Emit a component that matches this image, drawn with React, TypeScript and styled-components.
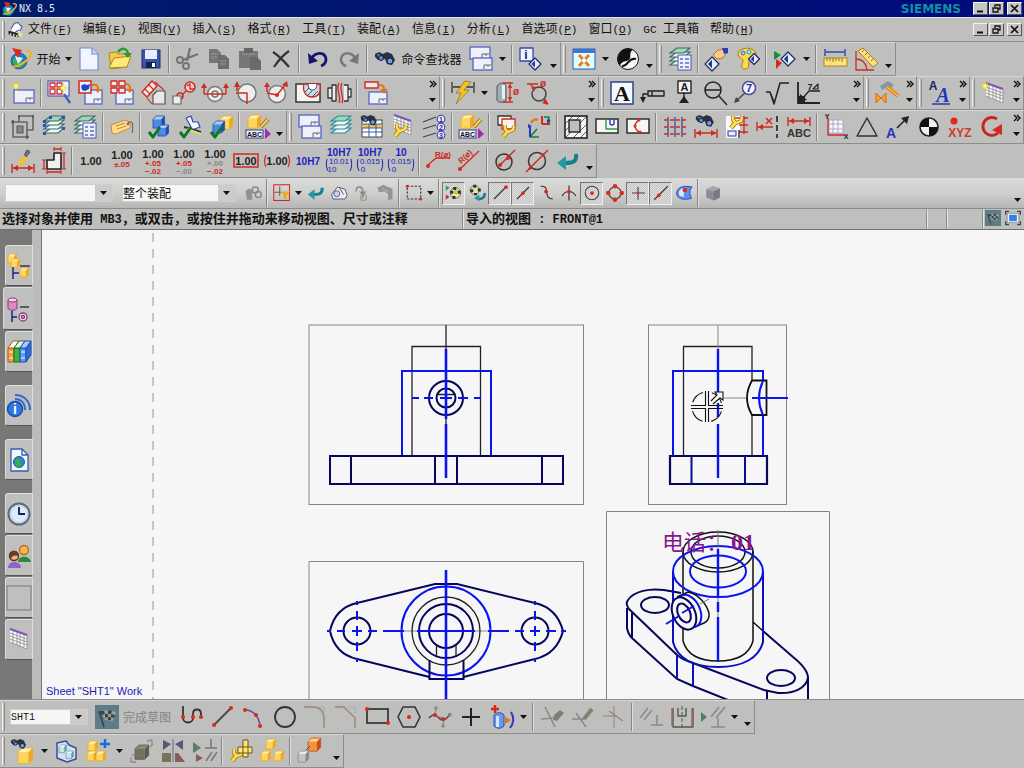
import React from 'react';
import styled, { createGlobalStyle } from 'styled-components';

const cjk = '"Noto Sans CJK SC", sans-serif';
const face = '#bfbfbd';
const RED = '#cf2a22';
const INK = '#222';
const GRAY = '#757575';

const GlobalStyle = createGlobalStyle`
  * { box-sizing: border-box; }
  html, body { margin: 0; padding: 0; background: ${face}; }
  body { font-family: "Liberation Sans", ${cjk}; font-size: 12px; color: #111; }
  button, select { font: inherit; color: inherit; margin: 0; padding: 0; border: 0; border-radius: 0; background: none; }
`;

const Window = styled.div`
  display: flex;
  flex-direction: column;
  height: 100vh;
  min-height: 600px;
  overflow: hidden;
`;

const TitleBar = styled.header`
  flex: none;
  display: flex;
  align-items: center;
  height: 17px;
  padding: 0 2px 0 1px;
  background: linear-gradient(90deg, #001c6a, #000a7e);
  color: #e8e8f0;
`;

const Title = styled.h1`
  flex: 1;
  margin: 0;
  padding-left: 2px;
  font: 10px/16px "DejaVu Sans Mono", monospace;
`;

const Brand = styled.span`
  margin-right: 11px;
  color: #0e93a0;
  font: bold 12px/16px "DejaVu Sans", sans-serif;
`;

const MenuBar = styled.nav`
  flex: none;
  display: flex;
  align-items: center;
  height: 25px;
  padding: 0 2px 0 0;
  border-top: 1px solid #e4e4e2;
  border-bottom: 1px solid #8f8f8d;
`;

const MenuItems = styled.div`
  flex: 1;
  display: flex;
  gap: 11px;
  padding-left: 3px;
`;

const MenuItem = styled.button`
  flex: none;
  font: 12px/22px "Liberation Mono", ${cjk};
  white-space: nowrap;
`;

const Latin = styled.span`
  font: 11px/22px "Liberation Mono", monospace;
`;

const WinButton = styled.button<{ $spaced?: boolean }>`
  display: flex;
  align-items: center;
  justify-content: center;
  width: 15px;
  height: 13px;
  margin-left: ${p => (p.$spaced ? 3 : 1)}px;
  background: #c6c6c4;
  border: 1px solid;
  border-color: #f4f4f4 #555 #555 #f4f4f4;
`;

const ToolRow = styled.div`
  flex: none;
  display: flex;
  height: 34px;
`;

const Bar = styled.div<{ $width?: number }>`
  display: flex;
  flex: ${p => (p.$width ? `0 0 ${p.$width}px` : '1 0 auto')};
  align-items: center;
  border: 1px solid;
  border-color: #d6d6d4 #8d8d8b #8d8d8b #b4b4b2;
  border-left: 0;
`;

const Grip = styled.span<{ $short?: boolean }>`
  flex: none;
  width: 3px;
  height: ${p => (p.$short ? 18 : 28)}px;
  margin: 0 2px;
  border-left: 1px solid #eee;
  border-right: 1px solid #8c8c8a;
`;

const Separator = styled.span`
  flex: none;
  width: 2px;
  height: 28px;
  margin: 0 2px;
  border-left: 1px solid #858583;
  border-right: 1px solid #e0e0de;
`;

const ToolButton = styled.button<{ $width?: number; $faded?: boolean }>`
  flex: none;
  display: flex;
  align-items: center;
  justify-content: center;
  gap: 4px;
  width: ${p => p.$width ?? 31}px;
  height: 30px;
  font: 12px/20px ${cjk};
  color: ${p => (p.$faded ? '#858585' : '#111')};
  white-space: nowrap;
`;

const SmallTool = styled.button<{ $on?: boolean }>`
  flex: none;
  display: flex;
  align-items: center;
  justify-content: center;
  width: 23px;
  height: 23px;
  border: 1px solid;
  border-color: ${p => (p.$on ? '#777 #eee #eee #777' : 'transparent')};
  background: ${p => (p.$on ? 'repeating-conic-gradient(#dcdcdc 0 25%, #c6c6c6 0 50%) 0 0 / 2px 2px' : 'none')};
`;

const ArrowButton = styled.button<{ $width?: number }>`
  flex: none;
  display: flex;
  align-items: center;
  justify-content: center;
  width: ${p => p.$width ?? 13}px;
  height: 28px;
`;

const OptionsButton = styled.button`
  flex: none;
  display: flex;
  flex-direction: column;
  align-items: center;
  justify-content: space-between;
  width: 13px;
  height: 30px;
  margin-left: auto;
  padding: 3px 0 6px;
`;

const SelectionBar = styled.div`
  flex: none;
  display: flex;
  align-items: center;
  height: 30px;
  padding-left: 2px;
  background: linear-gradient(#dadad8, #cfcfcd 50%, #b6b6b4);
`;

const Combo = styled.div<{ $width: number; $gap: number; $height: number }>`
  flex: none;
  display: grid;
  align-items: center;
  width: ${p => p.$width}px;
  height: ${p => p.$height}px;
  margin: 0 ${p => p.$gap}px 0 3px;
  background: linear-gradient(90deg, #f6f6f5 calc(100% - 17px), #cbcbc9 0);
  border: 1px solid #cfcfcd;

  > * { grid-area: 1 / 1; }
  > svg { justify-self: end; margin-right: 5px; pointer-events: none; }
`;

const ComboSelect = styled.select`
  appearance: none;
  width: 100%;
  height: 100%;
  outline: 0;
  font: 12px/14px ${cjk};
`;

const MonoSelect = styled(ComboSelect)`
  font: 10px/13px "Liberation Mono", monospace;
`;

const StatusBar = styled.div`
  flex: none;
  display: flex;
  height: 21px;
  border-top: 1px solid #8c8c8a;
  font: bold 13px/17px ${cjk};
  white-space: nowrap;
`;

const StatusCell = styled.div<{ $width?: number }>`
  flex: ${p => (p.$width ? `0 0 ${p.$width}px` : '1')};
  padding-left: 2px;
  overflow: hidden;
  border-right: 1px solid #e6e6e4;
  box-shadow: inset -1px 0 #8c8c8a;
`;

const StatusLatin = styled.span`
  font: bold 12px/17px "Liberation Mono", monospace;
`;

const StatusIcon = styled.button`
  flex: none;
  width: 20px;
  height: 18px;
  padding: 1px;
`;

const Workspace = styled.main`
  flex: 1;
  display: flex;
  min-height: 0;
  border-top: 1px solid #6f6f6f;
`;

const ResourceBar = styled.div`
  flex: none;
  display: flex;
  flex-direction: column;
  width: 42px;
  padding-top: 15px;
  background: linear-gradient(90deg, #787876 32px, #bbbbb9 0);
  border-right: 1px solid #777;
`;

const ResourceTab = styled.button<{ $active?: boolean; $spaced?: boolean }>`
  flex: none;
  display: flex;
  align-items: center;
  justify-content: center;
  width: ${p => (p.$active ? 30 : 28)}px;
  height: ${p => (p.$active ? 43 : 41)}px;
  margin: ${p => (p.$spaced ? 12 : 0)}px 0 1px ${p => (p.$active ? 3 : 5)}px;
  background: ${face};
  border: 1px solid;
  border-color: #dededc ${p => (p.$active ? face : '#dededc')} #555 #dededc;
  border-radius: 3px 0 0 3px;
`;

const Canvas = styled.section`
  flex: 1;
  display: flex;
  min-width: 0;
  min-height: 0;
  background: #f5f6f5;
`;

const Drawing = styled.svg`
  flex: 1;
  min-width: 0;
  min-height: 0;
  height: 100%;
`;

const BottomDock = styled.footer`
  flex: none;
  border-top: 1px solid #8a8a88;
`;

const Glyph = styled.svg`
  flex: none;
  display: block;
  overflow: visible;
`;

const l = (d: string, stroke = INK, width = 1.5, fill = 'none') => (
  <path d={d} stroke={stroke} strokeWidth={width} fill={fill} strokeLinejoin="round" />
);
const f = (d: string, fill: string) => <path d={d} fill={fill} />;
const c = (x: number, y: number, r: number, stroke = INK, fill = 'none', width = 1.5) => (
  <circle cx={x} cy={y} r={r} stroke={stroke} fill={fill} strokeWidth={width} />
);
const dot = (x: number, y: number, r = 2) => <circle cx={x} cy={y} r={r} fill="#e02818" />;
const t = (x: number, y: number, size: number, fill: string, text: string, weight = 400) => (
  <text x={x} y={y} fontSize={size} fill={fill} fontWeight={weight} textAnchor="middle" fontFamily='"Liberation Sans", sans-serif'>{text}</text>
);
const star = (x: number, y: number) => (
  <>
    {l(`M${x - 5} ${y}h10M${x} ${y - 5}v10M${x - 3} ${y - 3}l6 6M${x + 3} ${y - 3}l-6 6`, '#d8cc3a', 1)}
    {c(x, y, 2, '#f4ec50', '#fff98a', 1)}
  </>
);
const cube = (x: number, y: number, s: number, a = '#ffd65c', b = '#f0a81c', e = '#fff0a8') => (
  <>
    {f(`M${x} ${y + s * 0.3}h${s * 0.75}v${s * 0.8}h${-s * 0.75}z`, a)}
    {f(`M${x} ${y + s * 0.3}l${s * 0.3} ${-s * 0.3}h${s * 0.75}l${-s * 0.3} ${s * 0.3}z`, e)}
    {f(`M${x + s * 0.75} ${y + s * 0.3}l${s * 0.3} ${-s * 0.3}v${s * 0.8}l${-s * 0.3} ${s * 0.3}z`, b)}
    {l(`M${x} ${y + s * 0.3}l${s * 0.3} ${-s * 0.3}h${s * 0.75}v${s * 0.8}l${-s * 0.3} ${s * 0.3}h${-s * 0.75}z`, b, 0.8)}
  </>
);
const wrench = (x: number, y: number) => (
  <g transform={`translate(${x} ${y})`}>
    {l('M2 13l5-6', '#a87a10', 4.5)}
    {l('M4 1v4l3 3 5-2 1-4', '#a87a10', 4)}
    {l('M2 13l5-6', '#ffd84c', 2.8)}
    {l('M4 1v4l3 3 5-2 1-4', '#ffe258', 2.4)}
  </g>
);
const binoc = (x: number, y: number) => (
  <g transform={`translate(${x} ${y})`}>
    {f('M0 2l4-2 4 2 4-2 5 2 3 6-3 5-5-1-2-5-4 0-3 1-3-3z', '#2c3140')}
    {f('M2 2l4 1-2 2z', '#8891a8')}
    {c(6, 6, 2.5, '#16182a', '#5a88dc', 1)}
    {c(15, 9, 3, '#16182a', '#6b9cf0', 1)}
  </g>
);
const page = (x: number, y: number, w: number, h: number) => (
  <>
    <rect x={x} y={y} width={w} height={h} fill="#eef1fc" stroke="#5565c4" strokeWidth="1.3" />
    {l(`M${x + w - 8} ${y + h - 1}v-4h7M${x + w - 4} ${y + h - 5}v2`, '#666', 1)}
  </>
);
const check = l('M2 17l4 5 7-10', '#0b7a22', 3);
const layers = (col: string) => (
  <>
    {[0, 4, 8, 12].map(o => (
      <path key={o} d={`M2 ${18 - o}l7-5h13l-6 5z`} fill={o === 12 ? '#9fd8b4' : '#eef8f6'} stroke={col} strokeWidth="1.1" />
    ))}
  </>
);
const diamond = (x: number, y: number, s: number) => (
  <>
    {l(`M${x} ${y - s}l${s} ${s}l${-s} ${s}l${-s} ${-s}z`, '#1c2a66', 1.2, '#e8eefc')}
    {f(`M${x} ${y - s * 0.6}v${s * 1.2}l${-s * 0.6} ${-s * 0.6}z`, '#1c3f9a')}
  </>
);
const globe = (
  <>
    {c(11, 14, 8, '#1a6a9c', '#1c7fc8', 1)}
    {f('M5 12c4-3 6 0 9 2s2 5-2 7c-4 0-8-3-7-9z', '#3cae5a')}
    {f('M7 9l8 2-5 6z', '#e4f6ff')}
    {f('M4 1l10 2-4 8z', '#e0281c')}
    {l('M18 4c6-1 7 3 1 9-5 5-13 8-16 6', '#f0b428', 2)}
  </>
);
const grid = (x: number, y: number) => (
  <g transform={`translate(${x} ${y})`}>
    {f('M0 0l17 6v14L0 13z', '#fafafa')}
    {l('M0 4l17 6M0 7l17 6M0 10l17 6M3 1v13M7 3v13M10 4v13M14 5v13M0 13l17 7V6', '#888', 0.8)}
    {l('M0 0l17 6', '#8050c0', 2)}
  </g>
);
const dimText = (sub1?: string, sub2?: string, gray?: number) => (
  <>
    {t(12, 9, 11, INK, '1.00', 700)}
    {sub1 && t(12, 17, 8, gray === 1 ? '#888' : RED, sub1, 700)}
    {sub2 && t(12, 25, 8, gray === 2 ? '#888' : RED, sub2, 700)}
  </>
);
const fitText = (rows: string[]) => (
  <>
    {t(12, 7, 10, '#2222c0', rows[0], 700)}
    {t(12, 15, 8, '#2222c0', rows[1])}
    {t(5, 23, 8, '#2222c0', rows[2])}
    {l('M0 10c-1 4-1 8 1 12M24 10c1 4 1 8-1 12', '#2222c0', 1)}
  </>
);
const flag = (
  <>
    <rect x="0" y="0" width="24" height="24" fill="#5c7c8a" />
    {f('M5 6l8-1 8 2-3 9-8-1z', '#9a9c98')}
    {f('M5 6l4 0 1 3-4 1zM13 5l4 1-1 3-3 0zM10 9l3 0 0 3-3 1zM16 9l4 1-1 3-3-1zM13 12l3 0 0 3-3 0z', '#3c4448')}
    {l('M4 6l5 16', '#3a4246', 1.5)}
  </>
);

const icons: Record<string, React.ReactNode> = {
  nx: globe,
  app: <>{f('M5 11l5-8 6-1 4 5-3 7-6 2z', '#fff')}{l('M5 11l5-8 5-1 2 3 3 2-2 5-4 1-4 3', '#3c4fb4', 1.4)}{l('M2 14l17 5M3 14v4M7 15v5M11 17v4M15 18v3', '#222', 2)}{f('M16 14l5 3-2 5-5-3z', '#e8dc9a')}</>,
  newFile: <>{l('M3 1h12l6 6v16H3z', '#7b8ad4', 1.2, '#f2f5ff')}{l('M15 1v6h6', '#7b8ad4', 1.2, '#cfd8fa')}</>,
  open: <>{l('M1 6l7-1 2 2h9v13L3 22z', '#b08a14', 1, '#f0cc48')}{l('M1 21L6 11l17-2-4 11z', '#b08a14', 1, '#ffe97c')}{l('M10 5c4-5 9-4 10 2', '#2c9c30', 2.5)}{f('M15 6h9l-4 5z', '#2c9c30')}</>,
  save: <><rect x="3" y="3" width="18" height="18" fill="#3a55a8" stroke="#1d2c68" /><rect x="6" y="3" width="12" height="9" fill="#e6eefc" /><rect x="7" y="15" width="10" height="6" fill="#16204c" /><rect x="13" y="16" width="3" height="4" fill="#fff" /></>,
  cut: <>{l('M14 1l-3 13M22 7L7 13', GRAY, 2.4)}{c(4, 13, 3, GRAY, 'none', 2)}{c(10, 19, 3, GRAY, 'none', 2)}</>,
  copy: <>{f('M2 2h8l4 4v10H2z', '#777')}{f('M11 8h7l4 4v10H11z', '#6c6c6c')}{l('M4 7h6M4 10h6M13 14h6M13 17h6', '#999', 1)}</>,
  paste: <>{f('M1 4h19v17H1z', '#777')}<rect x="6" y="1" width="9" height="5" fill="#666" />{l('M4 7h13', '#999', 1)}{f('M12 10h7l4 4v9H12z', '#6a6a6a')}</>,
  del: l('M4 5c6 4 11 9 16 15M20 4C14 8 9 14 5 20', '#333', 2.2),
  undo: <>{l('M5 12c5-8 14-7 15 0 0 3-2 6-5 7', '#14146c', 2.8)}{f('M2 6l1 11 9-3z', '#14146c')}</>,
  redo: <>{l('M19 12C14 4 5 5 4 12c0 3 2 6 5 7', '#777', 2.5)}{f('M22 6l-1 11-9-3z', '#777')}</>,
  find: binoc(2, 5),
  sheets: <>{page(1, 0, 20, 12)}{page(4, 11, 19, 12)}</>,
  info: <>{l('M1 1h13v13H1z', '#3446b0', 1.3, '#f2f5ff')}{t(7, 12, 12, '#111d70', 'i', 700)}{diamond(16, 17, 6)}</>,
  fit: <><rect x="1" y="2" width="22" height="20" fill="#dff" stroke="#2c59b8" /><rect x="1" y="2" width="22" height="4" fill="#3c74d8" />{l('M7 8l10 11M17 8L7 19', '#f07818', 3)}{c(12, 13.5, 1.5, '#dff', '#dff')}</>,
  section: <>{c(12, 12, 10.5, '#111', '#f5f5f5', 1)}{f('M12 1.5a10.5 10.5 0 0 0-8 17c2-6 8-3 10-7 1-3-1-6 3-9z', '#111')}{l('M6 19c6 1 6-9 14-7', '#111', 2)}</>,
  layerList: <>{layers('#3c6a66')}<rect x="10" y="8" width="13" height="15" fill="#eef2ff" stroke="#4c5cb0" />{l('M12 12h3M17 12h4M12 16h3M17 16h4M12 20h3M17 20h4', '#5c6cc0', 1.3)}</>,
  editObj: <>{diamond(7, 17, 7)}{l('M8 8l5-5 7-1 2 3-4 6-6 1z', '#b87820', 1, '#fbc98a')}{f('M17 1l6 0 0 5-4 1z', '#2c3cb8')}</>,
  palette: <>{l('M3 4c6-5 16-3 17 3s-6 3-7 7 1 8-4 8-3-5-2-8-8-4-4-10z', '#a87812', 1, '#ffd84c')}{c(7, 6, 2, '#3c6cd8', '#8cc8f8', 1)}{c(13, 5, 2, '#2c8cb8', '#8ff', 1)}{diamond(18, 12, 5.5)}</>,
  compare: <>{f('M1 4l7 4-7 5z', '#179030')}{f('M3 12l6 4-6 6z', '#d02a20')}{diamond(15, 12, 7)}</>,
  ruler: <>{l('M2 2v7M22 2v7M3 5h18', '#2c49b0', 1.4)}<rect x="1" y="11" width="23" height="8" fill="#ffe27a" stroke="#b08424" />{l('M4 11v3M7 11v3M10 11v4M13 11v3M16 11v3M19 11v4', '#94701c', 1)}</>,
  angle: <>{l('M2 4v19h18M2 12c6 0 10 4 11 11', RED, 1.3)}{l('M4 4l5-3 15 15-5 4z', '#a67c20', 1, '#ffe07a')}{l('M8 5l2-2M11 8l2-2M14 11l2-2M17 14l2-2', '#94701c', 1)}</>,

  newSheet: <>{page(3, 9, 20, 13)}{star(5, 5)}</>,
  wizard: <><rect x="0" y="0" width="21" height="15" fill="#f4f4ff" stroke="#3446b0" />{l('M2 2h5v4H2zM9 2h5v4H9zM2 8h5v5H2zM9 8h5v5H9z', RED, 1.3)}{star(15, 7)}{l('M16 13l6 9', '#4860d0', 2.5)}</>,
  baseView: <>{page(6, 9, 17, 14)}<rect x="0" y="0" width="12" height="12" fill="#eef" stroke={RED} strokeWidth="1.5" />{f('M2 5l3-2 3 1 3-1-1 5-4 2-3-1z', '#2146c8')}{l('M13 4c5-1 6 1 6 4', '#e87418', 2)}{f('M15 8h7l-3 4z', '#e87418')}</>,
  stdViews: <>{page(6, 9, 17, 14)}{l('M1 0h6v5H1zM9 0h6v5H9zM1 7h6v5H1zM9 7h6v5H9z', RED, 1.3, '#f4e8e4')}{l('M16 3c3 0 4 2 4 5', '#e87418', 2)}{f('M16 8h7l-3 4z', '#e87418')}</>,
  projected: <>{l('M1 11L11 0l5 5L6 16z', RED, 1.4, '#f8e8e4')}{l('M12 23V14l4-4h8v13z', '#555', 1.2, '#e8e8e8')}{l('M4 8l5 5M8 4l5 5M14 1l9 8M6 17l5 6', RED, 1.1)}</>,
  detail: <>{c(18, 6, 5, RED, '#e4d4d0')}{l('M14 10l-4 4M15 5l3-2v5h4', RED, 1.3)}{c(8, 15, 3, RED)}{l('M1 15h8v8H1z', '#666', 1.2, '#eee')}</>,
  sectionV: <>{c(12, 13, 7.5, '#777', '#eee')}{c(12, 13, 3, '#777')}{l('M1 13V5M23 13V5M1 13h22', RED, 1.4)}{f('M1 2l3 5h-6zM23 2l3 5h-6z', RED)}</>,
  halfSec: <>{c(13, 12, 9, '#777', '#eee')}{l('M3 10V4M2 12h11v11', RED, 1.5)}{f('M3 0l3 6H0z', RED)}</>,
  revolved: <>{c(12, 13, 8.5, '#777', '#eee')}{l('M2 11V5M2 12l10 2 8-10', RED, 1.4)}{f('M2 1l3 5h-6zM22 0l1 6-6-2z', RED)}{dot(12, 14)}</>,
  breakout: <><rect x="0" y="3" width="24" height="18" fill="#f4f4f2" stroke="#333" strokeWidth="1.5" />{l('M8 3c-2 7 2 13 8 13s9-4 8-10V3z', RED, 1.3, '#cdd8e8')}{l('M9 11l4-4M11 15l5-5M16 16l6-6', '#456', 1)}{l('M12 3c0 8 9 8 9 0', '#333', 1, '#fff')}</>,
  breakView: <>{l('M1 7h4v10H1zM5 4h4v16H5z', '#333', 1.3, '#eee')}{l('M12 2c-4 7 3 13 0 20M15 2c-4 7 3 13 0 20', RED, 1.3)}{l('M17 4h4v16h-4M21 8h3v8h-3', '#333', 1.3, '#eee')}</>,
  updateView: <>{l('M1 1h13v6H1z', RED, 1.4, '#f4ece8')}{page(5, 11, 18, 12)}{l('M15 4c4 0 5 2 5 4', '#e87418', 2)}{f('M16 8h8l-4 5z', '#e87418')}</>,
  autoDim: <>{l('M1 1v11M23 1v11M2 6h20', '#333', 1.3)}{l('M14 0L5 12h5L5 23l13-14h-5l7-8z', '#8a6c10', 0.7, '#f0c428')}</>,
  cylDim: <>{l('M2 5c3-4 8-4 9 0v14c-1 3-8 3-9 0z', '#555', 1, '#9cb0b8')}{f('M7 4h3v14H7z', '#e6eef0')}{l('M8 2h10M8 21h10M15 4v15', RED, 1.3)}{f('M15 2l2 5h-4zM15 21l2-5h-4z', RED)}{t(21, 14, 10, RED, 'ø', 700)}</>,
  diaDim: <>{c(13, 13, 7, '#444')}{l('M1 3h11M5 4l3 4M18 18l4 5', RED, 1.3)}{f('M9 10l-4-3 4-2zM22 24l-6-2 4-4z', RED)}{t(17, 6, 10, RED, 'ø', 700)}</>,

  note: <><rect x="1" y="1" width="22" height="22" fill="#f6f8ff" stroke="#33408c" strokeWidth="1.5" /><text x="12" y="20" fontSize="22" fontWeight="700" textAnchor="middle" fontFamily='"Liberation Serif", serif' fill="#111">A</text></>,
  fcf: <>{l('M2 18V13h5M7 10h16v5H7zM11 10v5', '#222', 1.4)}{f('M2 22l-3-6h6z', '#222')}</>,
  datum: <>{l('M6 0h13v12H6zM12 12v6', '#222', 1.4, '#f4f4f4')}{t(12.5, 10, 11, '#222', 'A', 700)}{f('M12 15l5 7H7z', '#222')}</>,
  target: <>{c(10, 9, 8)}{l('M2 9h16M16 15l8 9', INK, 1.4)}</>,
  balloon: <>{c(15, 7, 6.5, '#4c4ca8', '#f4f4fc')}{t(15, 11, 11, '#2a2a9c', '7', 700)}{l('M11 12l-8 7', '#444', 1.3)}{f('M0 22l2-6 4 4z', '#444')}</>,
  surface: l('M1 11h4l4 12L15 2h9M5 11l4 10', INK, 1.5),
  weld: <>{l('M2 1v21h22', '#222', 1.8)}{l('M5 19l8-9h11', '#222', 1.3)}{f('M3 21l1-8 7 6zM2 15h7v7H2z', '#222')}{t(14, 9, 9, '#222', '7', 700)}{l('M17 8h5V3z', '#222', 1.2)}</>,
  hammer: <>{f('M5 5l8-5 6 4-3 3-4-1-5 3z', '#8694a4')}{l('M12 6l11 9', '#d88418', 4)}{l('M12 6l11 9', '#ffc050', 1.5)}{l('M1 12l10 10V12L1 22z', '#d46c10', 1, '#ff9c28')}</>,
  textStyle: <>{t(5, 9, 12, '#22226c', 'A', 700)}<text x="15" y="21" fontSize="20" fontWeight="700" fontStyle="italic" textAnchor="middle" fontFamily='"Liberation Serif", serif' fill="#2238b8">A</text>{l('M4 23h18', '#2238b8', 1.5)}</>,
  tableNew: <>{grid(5, 2)}{star(4, 5)}</>,

  frame: <>{l('M2 7h14v15H2zM8 1h14v14h-6M8 1v6', '#666', 1.6)}<rect x="6" y="11" width="6" height="7" fill="#888" stroke="#555" />{l('M0 7h3M2 5v4M15 22h3M16 20v4M22 0v3M8 0v3', '#555', 1.5)}</>,
  layers: <>{layers('#3c6a66')}{f('M1 17h3v3H1zM20 12h3v3h-3zM7 1h3v3H7zM20 1h3v3h-3zM1 9h3v3H1zM1 5h3v3H1z', '#3350b8')}</>,
  tag: <>{l('M1 10l14-5 6 3-1 5-14 6-4-1z', '#c88a30', 1, '#ffdc8c')}{l('M6 11l9-3M7 14l9-3', '#c88a30', 1)}{c(18, 9, 1, '#735', '#fff', 1)}{l('M18 8c4-3 6 0 4 10', '#555', 1)}</>,
  partCheck: <>{cube(6, 1, 11, '#4c8ae8', '#1c4cae', '#a8ccfa')}{cube(11, 10, 10, '#4c8ae8', '#1c4cae', '#a8ccfa')}{check}</>,
  draftCheck: <>{l('M8 3l5-2 2 6 5 0 2 5-8 3-2-5z', '#3446b0', 1.2, '#f4f6ff')}{l('M6 12l17 5', '#2c3050', 2)}{l('M9 14l14 5', '#e8d84c', 2)}{check}</>,
  asmCheck: <>{cube(11, 1, 12)}{cube(4, 6, 11, '#4c8ae8', '#1c4cae', '#a8ccfa')}{check}</>,
  abcEdit: <>{cube(2, 0, 12)}{l('M22 4l-7 8', '#8a6010', 3.5)}{l('M22 4l-7 8', '#ffd24c', 2)}<rect x="0" y="15" width="17" height="8" fill="#f4f4ff" stroke="#333c88" />{t(8.5, 21.5, 7, '#111', 'ABC', 700)}{f('M19 13l6 6-6 5z', '#a02cb4')}</>,
  stackLay: layers('#2c8c9c'),
  tableFind: <><rect x="2" y="5" width="20" height="17" fill="#fff" stroke="#444" />{f('M2 9h20v4H2z', '#f4c040')}{l('M2 9h20M2 13h20M2 17h20M9 9v13M16 9v13', '#345cb0', 1)}<g transform="scale(0.8)">{binoc(1, 0)}</g></>,
  gridWrench: <>{grid(3, 0)}{wrench(2, 8)}</>,
  autoBalloon: <>{l('M1 7l13-5M1 14l13-4M1 22l13-4', '#444', 1.3)}{[4, 12, 20].map((y, i) => <g key={y}>{c(19, y, 3.8, '#3c3cb0', '#eef', 1.1)}{t(19, y + 2.5, 7, '#2a2a9c', String(i + 1), 700)}</g>)}</>,
  boxWrench: <>{l('M2 1h13v9H2z', '#333', 1.3, '#f4f4f4')}{l('M6 4h13v10H6z', RED, 1.3, '#f8f4f0')}{wrench(5, 9)}</>,
  csys: <>{l('M3 12v10h9M3 22l7-8', '#1d8030', 1.7)}{l('M3 12v10', '#2238c8', 2)}{l('M15 9h8M15 9V1', RED, 2)}{l('M17 2h5v7', '#1d8030', 1.7)}{l('M4 8c2-4 5-4 7-3', '#e87418', 2.5)}{f('M1 9v4l4-2zM20 4l4 2-4 2z', '#2238c8')}</>,
  hatch: <><rect x="1" y="1" width="22" height="22" fill="#f4f4f4" stroke="#222" strokeWidth="1.6" />{l('M1 9l8-8M1 16L16 1M2 22L22 2M9 23L23 9M16 23l7-7', '#333', 0.8)}<rect x="5" y="5" width="11" height="12" fill={face} stroke="#222" strokeWidth="1.4" /></>,
  crop1: <><rect x="1" y="4" width="22" height="14" fill="#f6f6f6" stroke="#222" strokeWidth="1.4" />{l('M11 5v9h11', '#2c9c40', 1.4)}{l('M15 4v5q2 2 4 0V4', '#2c3cc0', 1.4)}</>,
  crop2: <><rect x="1" y="4" width="22" height="14" fill="#f6f6f6" stroke="#222" strokeWidth="1.4" />{l('M13 5q-8 6 0 12', RED, 1.5)}{dot(13, 5, 1.5)}{dot(9, 11, 1.5)}{dot(14, 17, 1.5)}</>,
  dimGrid: <>{l('M5 2v20M12 2v20M19 2v20', '#2c3480', 1.1)}<path d="M1 5h23M1 12h23M1 19h23" stroke={RED} strokeWidth="1.6" strokeDasharray="4 2" /></>,
  dimFind: <><g transform="scale(0.9)">{binoc(2, 0)}</g>{l('M1 14v9M23 14v9M2 18h20', RED, 1.4)}{f('M2 18l5-3v6zM22 18l-5-3v6z', RED)}</>,
  dimWrench: <>{f('M1 1h14v22H1z', '#f8f8ff')}{l('M6 3h17M14 10h9M14 17h9M19 1v18', RED, 1.3)}{wrench(4, 0)}<rect x="3" y="16" width="8" height="5" fill="#eef" stroke="#2238a8" />{l('M14 15v8', '#222', 1.3)}</>,
  dimX: <>{l('M1 7v9M2 12h15', RED, 1.4)}{f('M2 12l5-3v6z', RED)}{l('M10 3l6 6M16 3l-6 6', RED, 1.5)}<path d="M21 1v22" stroke="#222" strokeWidth="1.6" strokeDasharray="6 3" /></>,
  dimAbc: <>{l('M1 2v9M23 2v9M2 6h20', RED, 1.4)}{f('M2 6l5-3v6zM22 6l-5-3v6z', RED)}{t(12, 22, 11, '#333', 'ABC', 700)}</>,
  gridXY: <>{l('M5 5h14v13H5zM5 9h14M5 14h14M9 5v13M14 5v13', '#a8a8c8', 1, '#f8f8fc')}{l('M4 3v17h17', RED, 1.3)}{t(3, 4, 7, '#222', 'Y', 700)}{t(22, 24, 7, '#222', 'X', 700)}</>,
  triangle: l('M12 3l10 18H2z', '#333', 1.5),
  arrowA: <>{t(5, 23, 14, '#2a35b8', 'A', 700)}{l('M11 13l9-9', '#222', 1.6)}{f('M23 1l-2 8-6-6z', '#222')}</>,
  bullseye: <>{c(12, 12, 9, '#222', '#f0f0f0', 1.6)}{f('M12 12V3a9 9 0 0 0-9 9zM12 12v9a9 9 0 0 0 9-9z', '#111')}</>,
  xyz: <>{dot(6, 6, 3.5)}{t(12, 22, 12, '#d03a30', 'XYZ', 700)}</>,
  refresh: <>{l('M18 4A9 9 0 1 0 19 18', '#c8281c', 3)}{f('M13 15l10-6v11z', '#d8281c')}</>,

  dimBrush: <>{l('M1 15v9M23 15v9M2 19h20', RED, 1.4)}{f('M2 19l5-3v6zM22 19l-5-3v6z', RED)}{l('M16 1l3 2-4 5-2-1z', '#345', 1, '#6b7ca0')}{f('M13 6l4 4-5 6-6-1 2-3z', '#f0c040')}</>,
  profile: <>{l('M12 4h7v16H5v-9h7z', '#222', 1.6, '#f0f0ee')}{l('M12 0h7M2 11v9M5 23h14M22 4v16', RED, 1.3)}{l('M0 11h4M0 20h4M20 4h4M20 20h4M12-2v4M19-2v4M5 21v4M19 21v4', RED, 1.1)}</>,
  d1: t(12, 16, 11, INK, '1.00', 700),
  d2: <g transform="translate(0 1)">{dimText('±.05')}</g>,
  d3: dimText('+.05', '−.02'),
  d4: dimText('+.05', '−.00', 2),
  d5: dimText('+.00', '−.02', 1),
  d6: <><rect x="0" y="5" width="24" height="13" fill="none" stroke={RED} strokeWidth="1.5" />{t(12, 16, 11, '#222', '1.00', 700)}</>,
  d7: <>{t(12, 16, 11, '#222', '1.00', 700)}{l('M1 6c-2 4-2 8 0 12M23 6c2 4 2 8 0 12', RED, 1.2)}</>,
  d8: t(12, 16, 10, '#2222c0', '10H7', 700),
  d9: fitText(['10H7', '10.01', '10']),
  d10: fitText(['10H7', '0.015', '0']),
  d11: fitText(['10', '0.015', '0']),
  rad1: <>{l('M2 16l8-7h14', RED, 1.3)}{dot(2, 17)}{t(17, 8, 8, RED, 'R(ø)', 700)}</>,
  rad2: <>{l('M2 21L22 2', RED, 1.3)}{dot(3, 20)}<g transform="rotate(-43 10 11)">{t(11, 10, 8, RED, 'R(ø)', 700)}</g></>,
  hole1: <>{c(10, 13, 8, '#333')}{l('M6 16L21 1', RED, 1.4)}{dot(6, 16)}{dot(14, 9)}</>,
  hole2: <>{c(12, 12, 8.5, '#333')}{l('M1 23L23 1', RED, 1.4)}{f('M3 21l5-1-3-4zM20 4l-5 1 4 3z', RED)}</>,
  back: <>{l('M20 5c1 7-2 9-11 9', '#15808c', 4)}{f('M1 14l9-7v14z', '#2497a0')}</>,

  asmGray: <>{f('M2 9l5-3 4 3v12H4z', '#919191')}{c(15, 8, 4, '#888', 'none', 2)}{c(19, 14, 4, '#888', 'none', 2)}</>,
  selFilter: <><rect x="1" y="1" width="21" height="21" fill="none" stroke={RED} strokeWidth="1.4" />{l('M2 11h10M9 3v13', '#655', 1.3)}{f('M9 10h14l-5 6v5l-4-2v-4z', '#f0a828')}</>,
  magnet: <>{l('M2 14L10 4l10 3 3 8-3 5H4z', '#446', 1.1, '#e4eaf6')}{c(9, 13, 4, '#446', '#c4d4ee', 1)}{l('M13 6l5 8', RED, 1.3)}</>,
  clock1: <>{l('M4 10c0-8 9-8 9 0v9', '#888', 2)}{f('M8 10h10l-5 6z', '#888')}{c(14, 18, 4, '#998', 'none', 1.5)}</>,
  clock2: <>{f('M2 5l8-4 6 3 6 2v14l-6 2v-9l-5-3-7 1z', '#949494')}{l('M8 6l8 4', '#b0b0b0', 1.5)}</>,
  marquee: <><rect x="3" y="3" width="18" height="17" fill="none" stroke="#333" strokeWidth="1.5" strokeDasharray="3 2" />{dot(3, 3)}{dot(21, 20)}</>,
  snapAll: <>{c(14, 12, 7, '#555', '#e8e4b0', 1)}{f('M11 4h4v4h-4zM17 9h4v4h-4zM10 16h4v4h-4zM7 9h4v4H7z', '#332')}{c(15, 11, 2, '#a80', '#fd4', 1)}{f('M1 2l5 3-5 4z', '#2a9c38')}{f('M1 14l5 3-5 4z', RED)}</>,
  snapSet: <>{c(9, 8, 6, '#555', '#e8e4b0', 1)}{f('M7 1h4v4H7zM13 6h4v4h-4zM3 7h4v4H3zM8 12h4v3H8z', '#332')}{l('M22 12c1 6-3 8-9 8', '#15808c', 3.5)}{f('M8 19l7-5v9z', '#2497a0')}</>,
  endPt: <>{l('M4 20L20 4', '#333', 1.6)}{dot(20, 4, 2.5)}</>,
  midPt: <>{l('M4 20L20 4', '#333', 1.6)}{dot(12, 12, 2.5)}</>,
  ctrlPt: <>{l('M5 3c9 0 7 4 8 9s2 8 8 8', '#333', 1.6)}{dot(12, 10, 2.5)}</>,
  interPt: <>{l('M12 2v20M3 16c4-8 14-8 18 0', '#333', 1.6)}{dot(12, 10, 2.5)}</>,
  center: <>{c(12, 12, 9, '#444')}{dot(12, 12, 2.5)}</>,
  quad: <>{c(12, 12, 8, '#444')}{dot(12, 3, 3)}{dot(12, 21, 3)}{dot(3, 12, 3)}{dot(21, 12, 3)}</>,
  plusPt: <>{l('M12 4v17M4 12h17', '#444', 1.5)}{dot(12, 12, 1.5)}</>,
  onCurve: <>{l('M3 21L21 3', '#333', 1.6)}{dot(9, 15, 2.5)}</>,
  onFace: <>{l('M2 13C3 3 12 2 23 4c-4 3-4 9-1 15-7 2-18 3-20-6z', '#2450b8', 1.3, '#5c90ea')}{f('M5 12c1-6 6-7 10-7-3 4-4 8-3 12-4 0-7-1-7-5z', '#d6e8ff')}{dot(13, 8, 3)}</>,
  solidGray: <>{f('M3 7l9-4 9 3v12l-8 4-10-4z', '#8a8d94')}{f('M3 7l9-4 9 3-8 4z', '#a5a8ad')}{f('M13 10l8-4v12l-8 4z', '#777b84')}</>,

  flag,
  fitScreen: <><rect x="5" y="6" width="14" height="12" fill="#2c84dc" stroke="#eef" strokeWidth="2.5" />{l('M1 7V2h5M18 2h5v5M23 17v5h-5M6 22H1v-5', '#444', 2)}{l('M3 5h18v14H3z', '#777', 1)}</>,

  nav: <>{cube(1, 0, 8)}{cube(4, 5, 8)}{cube(13, 14, 8)}{l('M13 12h10', '#223', 1.3)}{l('M6 13v12M6 19h6', '#22228c', 1.5)}</>,
  partNav: <>{l('M2 3v8c0 3 9 3 9 0V3', '#8c3c78', 1, '#d88cc0')}<ellipse cx="6.5" cy="3" rx="4.5" ry="2" fill="#f4d4ea" stroke="#8c3c78" />{l('M14 10h9', '#223', 1.3)}{l('M6 14v11M6 20h5', '#22228c', 1.5)}{c(17, 20, 4, '#8c3c78', '#f4e4f0', 1.3)}{c(17, 20, 1.5, '#8c3c78')}</>,
  books: <>{l('M1 8h6v14H1z', '#b45c10', 1, '#f89c3c')}{l('M7 8h6v14H7z', '#17701c', 1, '#3cb444')}{l('M13 8h6v14h-6z', '#1c4cae', 1, '#5c9cf8')}{l('M19 8l5-7v14l-5 7z', '#1c4cae', 1, '#2c6cd8')}{l('M1 8l5-7h6L7 8z', '#b45c10', 1, '#fff')}{l('M7 8l5-7h6l-5 7z', '#17701c', 1, '#e4f8e4')}{l('M13 8l5-7h6l-5 7z', '#1c4cae', 1, '#a4ccff')}{l('M2 12h4M2 18h4M14 12h4M14 18h4', '#fff', 1)}</>,
  hd: <>{c(8, 15, 7.5, '#124cae', '#2c78e0', 1.4)}{t(8, 20, 14, '#fff', 'i', 700)}{l('M8 5c6 0 10 4 10 11M8 1c9 0 15 6 15 15', '#3466cc', 2)}</>,
  web: <>{l('M4 1h11l6 6v16H4z', '#345cb0', 1.3, '#f4f8ff')}{l('M15 1v6h6', '#345cb0', 1.3)}{c(12, 14, 5.5, '#1c5c9c', '#2c88d0', 1)}{f('M8 12c3-3 6 0 5 2s3 3 0 5-5-3-5-7z', '#3cac4c')}</>,
  clock: <>{c(12, 12, 10.5, '#5c6878', '#dcecfc', 2)}{c(12, 12, 8.5, '#b8ccdc', 'none', 1)}{l('M12 5v7h6', '#111c50', 1.8)}</>,
  people: <>{f('M11 18c0-7 12-7 13 0z', '#2a8c38')}{c(17, 6, 4.5, '#b46818', '#f8b450', 1.3)}{f('M1 24c0-8 13-8 13 0z', '#8c64d0')}{c(7, 12, 4.5, '#5c3020', '#f0b088', 1.3)}{f('M2 13c-1-8 10-8 10-1-4-1-7-1-8 3z', '#6c3c24')}</>,
  blank: <rect x="0" y="0" width="24" height="24" fill="none" stroke="#888" strokeWidth="1.3" />,
  sheetGrid: grid(3, 1),

  curveProf: <>{l('M3 1v12c0 6 10 6 10 0V9c0-6 8-6 8 0v4', '#333', 1.8)}{dot(3, 12)}{dot(13, 12)}{dot(21, 12)}</>,
  line: <>{l('M3 20L20 3', '#444', 1.8)}{dot(3, 20)}{dot(20, 3)}</>,
  arc: <>{l('M3 5c8 0 14 6 15 16', '#5c4cae', 1.5)}{dot(3, 5)}{dot(14, 10)}{dot(18, 21)}</>,
  circle: c(12, 12, 10, '#333', 'none', 1.8),
  fillet: <>{l('M0 2h8c8 0 12 4 12 12v9', '#998480', 1.4)}{l('M13 2h7v6', '#aaa', 1)}</>,
  chamfer: <>{l('M0 2h9l11 11v10', '#998480', 1.4)}{l('M13 2h7v6', '#aaa', 1)}</>,
  rect: <><rect x="1" y="4" width="21" height="14" fill="none" stroke="#333" strokeWidth="1.7" />{dot(1, 4)}{dot(22, 18)}</>,
  hexagon: <>{l('M6 2h12l5 10-5 10H6L1 12z', '#333', 1.6)}{dot(12, 12)}</>,
  spline: <>{l('M1 13c6-6 7-2 11 1s8-1 10-6', '#444', 1.4)}{l('M8 3L7 10l9 4-1 7', '#888', 1.2)}{dot(7, 10)}{dot(15, 14)}{c(8, 3, 1, '#888', '#888')}{c(15, 21, 1, '#888', '#888')}{c(22, 10, 1, '#888', '#888')}</>,
  plus: l('M12 3v18M3 12h18', '#222', 2),
  project: <>{l('M5 0v8M1 4h8', '#d82818', 2.5)}{l('M4 10c3-3 8-3 10 0v11c-3 3-7 3-10 0z', '#2c4cae', 1, '#6c98ec')}{f('M6 11h3v11H6z', '#d4e6ff')}{f('M15 12l6 3-6 4z', '#e87418')}{l('M21 7c3 5 3 11-1 16', '#2c3cc0', 2)}</>,
  trim: <>{l('M5 2l10 20M1 14l12-1', '#888', 1.5)}{f('M14 10l6-5 4 3-7 8-4-1z', '#857c74')}</>,
  extend: <>{l('M5 8l10 14M1 14h12', '#888', 1.5)}{l('M13 14l8-10', '#85806c', 4)}</>,
  corner: <>{l('M12 1v22M1 11h14', '#999', 1.4)}{l('M7 6l14 10', '#a08080', 1.5)}</>,
  constraint: <>{l('M1 13L9 3M5 15l8-10M12 20h12M18 10v10', '#8a8a8a', 1.5)}</>,
  symmetric: <>{l('M3 3v19h20V3M8 3v8h8V3', '#555', 1.4)}{l('M2 3v18M22 3v18', '#a06060', 1.4)}<path d="M12 1v23" stroke="#555" strokeDasharray="4 2" /></>,
  autoCon: <>{f('M0 7l6 5-6 5z', '#4c8068')}{l('M10 12l8-10M15 13l9-11M10 22h14M17 13v9', '#8a8a8a', 1.5)}</>,

  findComp: <>{cube(7, 9, 14)}<g transform="scale(0.75)">{binoc(0, 0)}</g></>,
  wireComp: <>{l('M2 4l9-2 3 4 7 3v11l-9 3-10-4z', '#3c4c9c', 1.5, '#d4e4ee')}{cube(4, 6, 7, '#c8e4e8', '#6c9cac', '#f0ffff')}{cube(11, 12, 7, '#c8e4e8', '#6c9cac', '#f0ffff')}</>,
  addComp: <>{cube(2, 2, 9)}{cube(1, 12, 9)}{cube(10, 12, 9)}{l('M19 0v9M14 5h10', '#1c6cd8', 2.5)}</>,
  moveComp: <>{cube(5, 6, 13, '#77725f', '#5f5b4c', '#8d8978')}{l('M17 2l5-1v5M1 18v5h5M20 8l3-3M2 15l3 3', '#8c8c98', 1.3)}</>,
  mirror: <>{f('M2 1l8 4-8 6zM22 1l-8 4 8 6z', '#585878')}{l('M12 0v23', '#778', 1.2)}{f('M1 14h9v9H1z', '#78745c')}{f('M14 14h3l7 9H14z', '#806058')}</>,
  asmCon: <>{f('M1 3l8 6-8 5z', '#5c7c6c')}{f('M4 15l7 4-7 4z', '#8c5c58')}{l('M13 9h12M19 0v9M14 22l6-9M19 22l6-9', '#777', 1.5)}</>,
  seqWrench: <>{wrench(1, 9)}{l('M9 8h14v6H9zM14 1h5v17h-5z', '#6c5410', 1, '#ffe57c')}</>,
  explode: <>{cube(6, 0, 9)}{cube(1, 12, 9)}{cube(14, 12, 9)}</>,
  replace: <>{cube(11, -1, 12, '#f09040', '#c84c1c', '#ffd46c')}{cube(1, 12, 10, '#c4c4c4', '#888', '#eee')}{l('M9 11l4-4', '#555', 1)}</>,
};

const Icon = ({ name, size = 24 }: { name: string; size?: number }) => (
  <Glyph width={size} height={size} viewBox="0 0 24 24" fill="none" aria-hidden="true">{icons[name]}</Glyph>
);

const Triangle = () => (
  <Glyph width="7" height="4" viewBox="0 0 7 4" aria-hidden="true"><path d="M0 0h7L3.5 4z" fill="#111" /></Glyph>
);

const Chevrons = () => (
  <Glyph width="8" height="6" viewBox="0 0 8 6" aria-hidden="true"><path d="M1 0l3 3-3 3M4 0l3 3-3 3" fill="none" stroke="#111" strokeWidth="1.4" /></Glyph>
);

const Options = ({ more }: { more?: boolean }) => (
  <OptionsButton aria-label="工具条选项">{more ? <Chevrons /> : <span />}<Triangle /></OptionsButton>
);

/* A tool list is written as icon names, with "|" for a separator and "v" for a drop-down arrow. */
const Tools = ({ list }: { list: string }) => (
  <>
    {list.split(' ').map((name, i) => {
      if (name === '|') return <Separator key={i} />;
      if (name === 'v') return <ArrowButton key={i} aria-label="更多"><Triangle /></ArrowButton>;
      return <ToolButton key={i} aria-label={name}><Icon name={name} /></ToolButton>;
    })}
  </>
);

/* The snap bar uses smaller buttons; a leading "*" marks one that is switched on. */
const SmallTools = ({ list }: { list: string }) => (
  <>
    {list.split(' ').map((name, i) => {
      if (name === '|') return <Separator key={i} />;
      if (name === 'v') return <ArrowButton key={i} $width={11} aria-label="更多"><Triangle /></ArrowButton>;
      const on = name.startsWith('*');
      const key = on ? name.slice(1) : name;
      return <SmallTool key={i} $on={on} aria-pressed={on} aria-label={key}><Icon name={key} size={18} /></SmallTool>;
    })}
  </>
);

const WindowButtons = () => (
  <>
    <WinButton aria-label="最小化"><Glyph width="9" height="9"><path d="M1 7.5h6" stroke="#111" strokeWidth="2" /></Glyph></WinButton>
    <WinButton aria-label="还原"><Glyph width="9" height="9"><path d="M3 3V1h5v4H6M1 4h5v4H1z" fill="none" stroke="#111" strokeWidth="1.3" /></Glyph></WinButton>
    <WinButton $spaced aria-label="关闭"><Glyph width="9" height="9"><path d="M1 1l7 7M8 1L1 8" stroke="#111" strokeWidth="1.7" /></Glyph></WinButton>
  </>
);

const menus: [string, string][] = [
  ['文件', 'F'], ['编辑', 'E'], ['视图', 'V'], ['插入', 'S'], ['格式', 'R'], ['工具', 'T'], ['装配', 'A'],
  ['信息', 'I'], ['分析', 'L'], ['首选项', 'P'], ['窗口', 'O'], ['GC 工具箱', ''], ['帮助', 'H'],
];

const tabs: { icon: string; label: string; active?: boolean; spaced?: boolean }[] = [
  { icon: 'nav', label: '装配导航器' },
  { icon: 'partNav', label: '部件导航器', active: true },
  { icon: 'books', label: '重用库' },
  { icon: 'hd', label: 'HD3D 工具', spaced: true },
  { icon: 'web', label: 'Web 浏览器', spaced: true },
  { icon: 'clock', label: '历史记录', spaced: true },
  { icon: 'people', label: '角色' },
  { icon: 'blank', label: '空面板' },
  { icon: 'sheetGrid', label: '图纸表格' },
];

const Blue = '#0a14f0';
const Deep = '#06065c';

const FrontView = () => (
  <g fill="none">
    <rect x="309" y="325" width="274.5" height="179.5" stroke="#858585" />
    <path d="M412 456V346.5h68.5V456M446 325v153M438 394.5h17" stroke="#222" strokeWidth="1.3" />
    <path d="M402 456V371h89v85" stroke={Blue} strokeWidth="2" />
    <path d="M330 456h233v28H330zM351 456v28M435 456v28M457 456v28M542 456v28" stroke={Deep} strokeWidth="2" />
    <circle cx="446" cy="398" r="17" stroke={Deep} strokeWidth="2" />
    <circle cx="446" cy="398" r="9.5" stroke={Deep} strokeWidth="2" />
    <path d="M446 349v70M446 424v54" stroke={Blue} strokeWidth="2.6" />
    <path d="M412 398h7M424 398h9M440 398h12M458 398h10M474 398h7" stroke={Blue} strokeWidth="2" />
  </g>
);

const SideView = () => (
  <g fill="none">
    <rect x="648.5" y="325" width="138" height="179.5" stroke="#858585" />
    <path d="M683.5 456V346.5H752V456" stroke="#222" strokeWidth="1.3" />
    <path d="M718 325v24M724 398h23" stroke="#888" />
    <path d="M673 456V371h90v85" stroke={Blue} strokeWidth="2" />
    <path d="M670 456h97v28h-97z" stroke={Deep} strokeWidth="2.2" />
    <path d="M691.5 456v28M745 456v28" stroke="#0a0aa0" strokeWidth="2" />
    <path d="M752 380.5h14.5V415H752q-10-17 0-34.5z" fill="#f5f6f5" stroke="#111" strokeWidth="1.8" />
    <path d="M763 381q-8 17 0 34" stroke={Blue} strokeWidth="2" />
    <path d="M752 398h36" stroke={Blue} strokeWidth="2" />
    <path d="M718 349v50M718 403v14M718 424v54" stroke={Blue} strokeWidth="2.4" />
  </g>
);

const TopView = () => (
  <g fill="none">
    <path d="M309 700V561.5h274.5V700" stroke="#858585" />
    <path d="M429.5 677L357 659q-22-5-27-28 5-23 27-28l78-19h22l78 19q22 5 28 28-6 23-28 28l-71.5 18" stroke={Deep} strokeWidth="2" />
    <path d="M401 631h90" stroke="#888" />
    <circle cx="446" cy="631" r="44.5" stroke={Blue} strokeWidth="2" />
    <circle cx="446" cy="631" r="34" stroke="#222" strokeWidth="1.3" />
    <circle cx="446" cy="631" r="27" stroke={Deep} strokeWidth="2" />
    <circle cx="446" cy="631" r="17" stroke={Deep} strokeWidth="2" />
    <circle cx="357" cy="631" r="13.5" stroke={Deep} strokeWidth="2" />
    <circle cx="535" cy="631" r="13.5" stroke={Deep} strokeWidth="2" />
    <path d="M429.5 660v19h34v-19" stroke={Deep} strokeWidth="2" />
    <path d="M436.5 645v11M456 645v11" stroke="#222" strokeWidth="1.3" />
    <path d="M446 570v130" stroke={Blue} strokeWidth="2.6" />
    <path d="M383 631h21M417 631h58M488 631h21M327 631h4M337 631h8M352 631h10M368 631h9M515 631h9M530 631h10M546 631h10M561 631h5" stroke={Blue} strokeWidth="2" />
    <path d="M357 601v4M357 611v9M357 626v10M357 642v9M357 658v4M535 601v4M535 611v9M535 626v10M535 642v9M535 658v4" stroke={Blue} strokeWidth="2" />
  </g>
);

const IsoView = () => (
  <g fill="none">
    <path d="M606.5 700V511.5h223V700" stroke="#858585" />
    <path d="M683 551.5V641c4 14 16 20 35 20s31-6 35-20V551.5M753 622l10 9" stroke="#111" strokeWidth="1.5" />
    <ellipse cx="718" cy="552" rx="35" ry="20" stroke="#111" strokeWidth="1.5" />
    <ellipse cx="718" cy="552" rx="27" ry="16" stroke="#111" strokeWidth="1.5" />
    <path d="M763 631l30 26c10 8 15 14 15 21-2 10-14 16-30 15l-14-3-71-27q-10-3-16-8l-48-46q-4-5-1-9c6-9 22-12 36-10l17 3" stroke={Deep} strokeWidth="2" />
    <path d="M627 608v20q1 6 5 10l45 41 16 7 35 14M632 613v24M767 691v9M808 678v22" stroke={Deep} strokeWidth="2" />
    <path d="M677 656v23M693 663v24M673 571v71c4 16 20 25 45 25s41-9 45-25v-71" stroke="#0a10c0" strokeWidth="2" />
    <ellipse cx="718" cy="571.5" rx="45" ry="25.5" stroke={Blue} strokeWidth="2" />
    <ellipse cx="718" cy="571.5" rx="28" ry="16" stroke={Blue} strokeWidth="2" />
    <ellipse cx="655" cy="605" rx="14" ry="8" stroke={Deep} strokeWidth="2" />
    <ellipse cx="781" cy="678" rx="14" ry="8" stroke={Deep} strokeWidth="2" />
    <path d="M677 597l11-5c10 2 18 11 21 21q1 7-5 10l-14 6" fill="#f5f6f5" stroke="#111" strokeWidth="1.5" />
    <ellipse cx="689" cy="611" rx="11" ry="17" transform="rotate(-25 689 611)" fill="#f5f6f5" stroke={Blue} strokeWidth="2" />
    <ellipse cx="684" cy="613.5" rx="11" ry="17" transform="rotate(-25 684 613.5)" fill="#f5f6f5" stroke={Deep} strokeWidth="2" />
    <ellipse cx="684" cy="613" rx="6" ry="10" transform="rotate(-25 684 613)" stroke={Deep} strokeWidth="2" />
    <path d="M666 624l13-8M682 613l12-7" stroke={Blue} strokeWidth="2" />
    <path d="M700 604l9-5M718 530v132" stroke="#777" />
    <path d="M718 549v49M718 602v10M718 617v45" stroke={Blue} strokeWidth="2.4" />
  </g>
);

const Cursor = () => (
  <g fill="none" stroke="#111" strokeWidth="1.1">
    <circle cx="707" cy="407" r="15" strokeDasharray="14.56 9" strokeDashoffset="-4.5" />
    <path d="M705.5 391v14.5H691M708.5 391v14.5H723M705.5 422v-13.5H691M708.5 422v-13.5H723" />
    <path d="M711 401l6-6-2-3h8v8l-3-2-7 6" fill="#f5f6f5" />
  </g>
);

export default function App() {
  return (
    <Window>
      <GlobalStyle />
      <TitleBar>
        <Icon name="nx" size={16} />
        <Title>NX 8.5</Title>
        <Brand>SIEMENS</Brand>
        <WindowButtons />
      </TitleBar>
      <MenuBar>
        <Grip $short />
        <Icon name="app" size={18} />
        <MenuItems>
          {menus.map(([name, key]) => (
            <MenuItem key={name}>
              {key ? <>{name}<Latin>(<u>{key}</u>)</Latin></> : <><Latin>GC </Latin>工具箱</>}
            </MenuItem>
          ))}
        </MenuItems>
        <WindowButtons />
      </MenuBar>

      <ToolRow>
        <Bar $width={561}>
          <Grip />
          <ToolButton $width={66}><Icon name="nx" />开始<Triangle /></ToolButton>
          <Tools list="newFile open save | cut copy paste del | undo redo |" />
          <ToolButton $width={95}><Icon name="find" />命令查找器</ToolButton>
          <Tools list="sheets v | info" />
          <Options />
        </Bar>
        <Bar $width={95}><Grip /><Tools list="fit v section" /><Options /></Bar>
        <Bar $width={239}><Grip /><Tools list="layerList | editObj palette | compare v | ruler angle" /><Options /></Bar>
      </ToolRow>
      <ToolRow>
        <Bar $width={440}>
          <Grip />
          <Tools list="newSheet | wizard baseView stdViews projected detail sectionV halfSec revolved breakout breakView | updateView" />
          <Options more />
        </Bar>
        <Bar $width={159}><Grip /><Tools list="autoDim v cylDim diaDim" /><Options more /></Bar>
        <Bar $width={265}><Grip /><Tools list="note fcf datum target balloon surface weld" /><Options more /></Bar>
        <Bar $width={53}><Grip /><Tools list="hammer" /><Options more /></Bar>
        <Bar $width={53}><Grip /><Tools list="textStyle" /><Options more /></Bar>
        <Bar><Grip /><Tools list="tableNew" /><Options more /></Bar>
      </ToolRow>
      <ToolRow>
        <Bar $width={287}>
          <Grip />
          <Tools list="frame layers layerList | tag | partCheck draftCheck asmCheck | abcEdit" />
          <Options />
        </Bar>
        <Bar>
          <Grip />
          <Tools list="sheets stackLay tableFind gridWrench autoBalloon | abcEdit | boxWrench csys | hatch crop1 crop2 | dimGrid dimFind dimWrench dimX dimAbc | gridXY triangle arrowA bullseye xyz refresh" />
          <Options more />
        </Bar>
      </ToolRow>
      <ToolRow>
        <Bar $width={597}>
          <Grip />
          <Tools list="dimBrush profile | d1 d2 d3 d4 d5 d6 d7 d8 d9 d10 d11 | rad1 rad2 | hole1 hole2 back" />
          <Options />
        </Bar>
      </ToolRow>

      <SelectionBar>
        <Combo $width={108} $gap={6} $height={18}>
          <ComboSelect aria-label="类型过滤器"><option> </option></ComboSelect>
          <Triangle />
        </Combo>
        <Combo $width={114} $gap={5} $height={18}>
          <ComboSelect aria-label="选择范围"><option>整个装配</option></ComboSelect>
          <Triangle />
        </Combo>
        <SmallTools list="asmGray | selFilter v back magnet clock1 clock2 | marquee v | *snapAll snapSet *endPt *midPt ctrlPt interPt *center quad *plusPt *onCurve onFace | solidGray" />
        <Options />
      </SelectionBar>

      <StatusBar>
        <StatusCell $width={464}>选择对象并使用<StatusLatin> MB3</StatusLatin>，或双击，或按住并拖动来移动视图、尺寸或注释</StatusCell>
        <StatusCell>导入的视图<StatusLatin> : FRONT@1</StatusLatin></StatusCell>
        <StatusCell $width={20} />
        <StatusCell $width={36} />
        <StatusIcon aria-label="完成草图"><Icon name="flag" size={16} /></StatusIcon>
        <StatusIcon aria-label="全屏"><Icon name="fitScreen" size={16} /></StatusIcon>
      </StatusBar>

      <Workspace>
        <ResourceBar>
          {tabs.map(tab => (
            <ResourceTab key={tab.icon} $active={tab.active} $spaced={tab.spaced} aria-label={tab.label}>
              <Icon name={tab.icon} />
            </ResourceTab>
          ))}
        </ResourceBar>
        <Canvas>
          <Drawing viewBox="42 230 982 469" preserveAspectRatio="xMinYMin slice" role="img" aria-label="图纸 SHT1">
            <path d="M153 233v470" stroke="#c6c6c6" strokeWidth="2" strokeDasharray="9 7" />
            <FrontView />
            <SideView />
            <TopView />
            <IsoView />
            <text x="662" y="550" fontSize="22" fill="#8a1590" fontFamily={`"Liberation Serif", ${cjk}`}>电话：<tspan x="731" fontSize="24" fontWeight="700">01</tspan></text>
            <Cursor />
            <text x="46" y="695" fontSize="11" fill="#1c1cb4" fontFamily='"Liberation Sans", sans-serif'>Sheet "SHT1" Work</text>
          </Drawing>
        </Canvas>
      </Workspace>

      <BottomDock>
        <ToolRow>
          <Bar $width={755}>
            <Grip />
            <Combo $width={78} $gap={2} $height={16}>
              <MonoSelect aria-label="图纸页"><option>SHT1</option></MonoSelect>
              <Triangle />
            </Combo>
            <ToolButton $width={86} $faded><Icon name="flag" />完成草图</ToolButton>
            <Tools list="curveProf line arc circle fillet chamfer rect hexagon spline plus project v | trim extend corner | constraint symmetric autoCon v" />
            <Options />
          </Bar>
        </ToolRow>
        <ToolRow>
          <Bar $width={344}>
            <Grip />
            <Tools list="findComp v wireComp addComp v moveComp mirror asmCon | seqWrench explode | replace" />
            <Options />
          </Bar>
        </ToolRow>
      </BottomDock>
    </Window>
  );
}
